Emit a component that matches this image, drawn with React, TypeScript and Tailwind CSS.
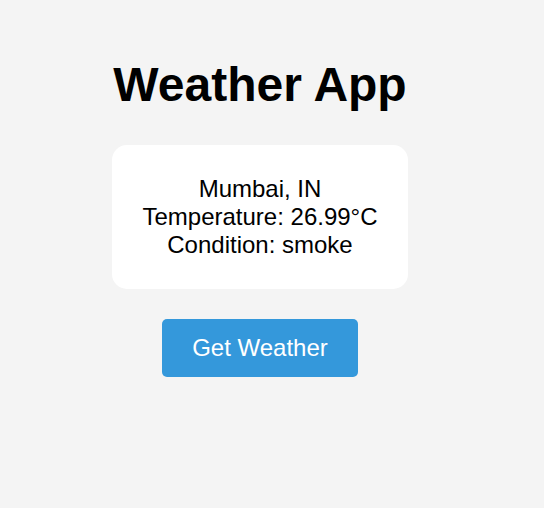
import React from 'react';

const weather = {
  city: 'Mumbai',
  country: 'IN',
  temp: 26.99,
  condition: 'smoke',
};

export default function App() {
  return (
    <div className="min-h-[508px] w-full bg-[#f4f4f4] font-['Liberation_Sans',Arial,sans-serif] text-black">
      <div className="w-[520px] flex flex-col items-center pt-[57px]">
        <h1 className="text-[48px] leading-[normal] font-bold">Weather App</h1>

        <div className="mt-[33px] w-[296px] bg-white rounded-[15px] py-[30px] text-center text-[24px] leading-[normal]">
          <p>{weather.city}, {weather.country}</p>
          <p>Temperature: {weather.temp}°C</p>
          <p>Condition: {weather.condition}</p>
        </div>

        <button className="mt-[30px] bg-[#3498db] text-white text-[24px] leading-[normal] px-[30px] py-[15px] rounded-[5px]">
          Get Weather
        </button>
      </div>
    </div>
  );
}
